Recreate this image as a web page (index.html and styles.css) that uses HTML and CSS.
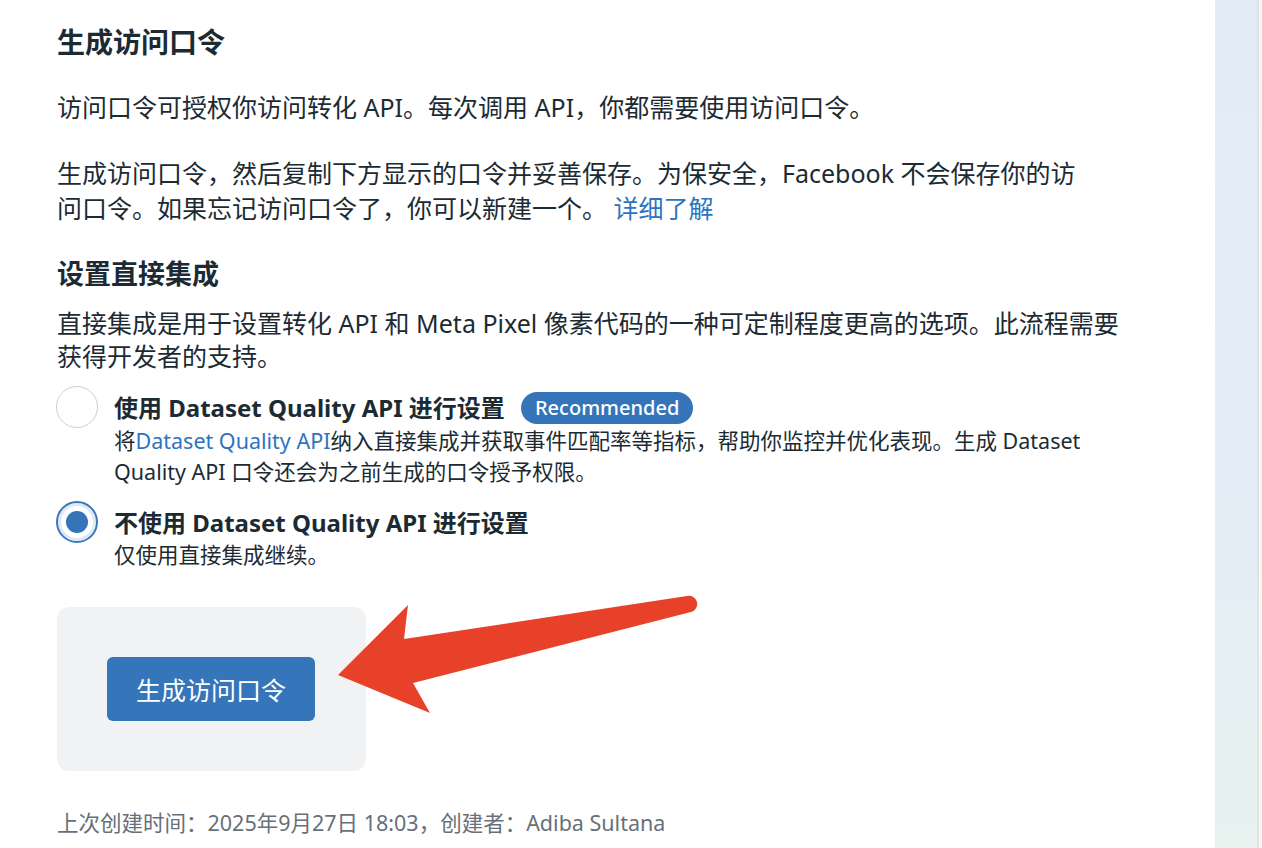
FILE: index.html
```html
<!DOCTYPE html>
<html lang="zh-CN">
  <head>
    <meta charset="UTF-8" />
    <meta name="viewport" content="width=device-width, initial-scale=1.0" />
    <title>生成访问口令</title>
    <link rel="stylesheet" href="styles.css">
  </head>
  <body>
    <div class="page">
      <h1 class="title">生成访问口令</h1>
      <p class="intro">访问口令可授权你访问转化 API。每次调用 API，你都需要使用访问口令。</p>
      <p class="intro">生成访问口令，然后复制下方显示的口令并妥善保存。为保安全，Facebook 不会保存你的访<br>问口令。如果忘记访问口令了，你可以新建一个。 <a class="link" href="#">详细了解</a></p>

      <h2 class="subtitle">设置直接集成</h2>
      <p class="lead">直接集成是用于设置转化 API 和 Meta Pixel 像素代码的一种可定制程度更高的选项。此流程需要<br>获得开发者的支持。</p>

      <div class="option">
        <span class="radio"></span>
        <div class="option-body">
          <div class="option-title">使用 Dataset Quality API 进行设置 <span class="badge">Recommended</span></div>
          <div class="option-desc">将<a class="link" href="#">Dataset Quality API</a>纳入直接集成并获取事件匹配率等指标，帮助你监控并优化表现。生成 Dataset<br>Quality API 口令还会为之前生成的口令授予权限。</div>
        </div>
      </div>
      <div class="option">
        <span class="radio checked"></span>
        <div class="option-body">
          <div class="option-title">不使用 Dataset Quality API 进行设置</div>
          <div class="option-desc">仅使用直接集成继续。</div>
        </div>
      </div>

      <div class="generate">
        <button class="btn">生成访问口令</button>
      </div>

      <p class="meta">上次创建时间：2025年9月27日 18:03，创建者：Adiba Sultana</p>

      <svg class="arrow" width="1213" height="848" viewBox="0 0 1213 848">
        <path d="M338 675 L408 605 L404 639 L687 596 A8 8 0 0 1 691 612 L413 683 L430 713 Z" fill="#e8412a" />
      </svg>
    </div>
    <div class="rail"></div>
    <div class="edge"></div>
  </body>
</html>
```

FILE: styles.css
```css
* {
  margin: 0;
  padding: 0;
  box-sizing: border-box;
}

body {
  display: flex;
  height: 848px;
  overflow: hidden;
  font-family: "Noto Sans", "Noto Sans CJK SC", sans-serif;
  color: #1c2b33;
  background: #fff;
}

.page {
  flex: 1;
  position: relative;
  padding: 24px 0 0 57px;
  background: #fff;
}

.title {
  font-size: 28px;
  line-height: 36px;
  font-weight: 700;
}

.intro {
  font-size: 25px;
  line-height: 35px;
  margin-top: 30px;
}
.intro + .intro {
  margin-top: 31px;
}

.link {
  color: #2e73bf;
  text-decoration: none;
}

.subtitle {
  font-size: 27px;
  line-height: 34px;
  font-weight: 700;
  margin-top: 31px;
}

.lead {
  font-size: 25px;
  line-height: 33px;
  margin-top: 16px;
}

.option {
  display: flex;
  align-items: flex-start;
  margin-top: 19px;
}
.option + .option {
  margin-top: 20px;
}

.radio {
  flex: none;
  position: relative;
  width: 42px;
  height: 42px;
  margin: -6px 16px 0 -1px;
  border: 1.5px solid #ccd0d5;
  border-radius: 50%;
  background: #fff;
}
.radio.checked {
  border: 2px solid #3b78bb;
  box-shadow: inset 0 0 0 3px #dfe9f5;
}
.radio.checked::after {
  content: "";
  position: absolute;
  left: 8px;
  top: 8px;
  width: 22px;
  height: 22px;
  border-radius: 50%;
  background: #3574b8;
}

.option-title {
  font-size: 24px;
  line-height: 32px;
  font-weight: 700;
}

.badge {
  display: inline-block;
  vertical-align: top;
  margin-left: 10px;
  padding: 0 14px;
  height: 32px;
  line-height: 32px;
  border-radius: 16px;
  background: #3574b8;
  color: #fff;
  font-size: 20px;
  font-weight: 500;
}

.option-desc {
  font-size: 21.5px;
  line-height: 31px;
  margin-top: 0.5px;
}

.generate {
  width: 309px;
  margin-top: 37px;
  padding: 50px;
  border-radius: 12px;
  background: #f1f2f4;
}

.btn {
  display: block;
  width: 208px;
  height: 64px;
  border: none;
  border-radius: 6px;
  background: #3575b9;
  color: #fff;
  font-family: inherit;
  font-size: 25px;
}

.meta {
  margin-top: 37px;
  font-size: 21.5px;
  line-height: 30px;
  color: #67707a;
}

.arrow {
  position: absolute;
  left: 0;
  top: 0;
  pointer-events: none;
}

.rail {
  width: 44px;
  background: linear-gradient(#e3ebf7, #e4edf6 60%, #e7f1ee);
  border-right: 2px solid #e2e2e2;
}

.edge {
  width: 3px;
  background: #f6f6f6;
}
```
